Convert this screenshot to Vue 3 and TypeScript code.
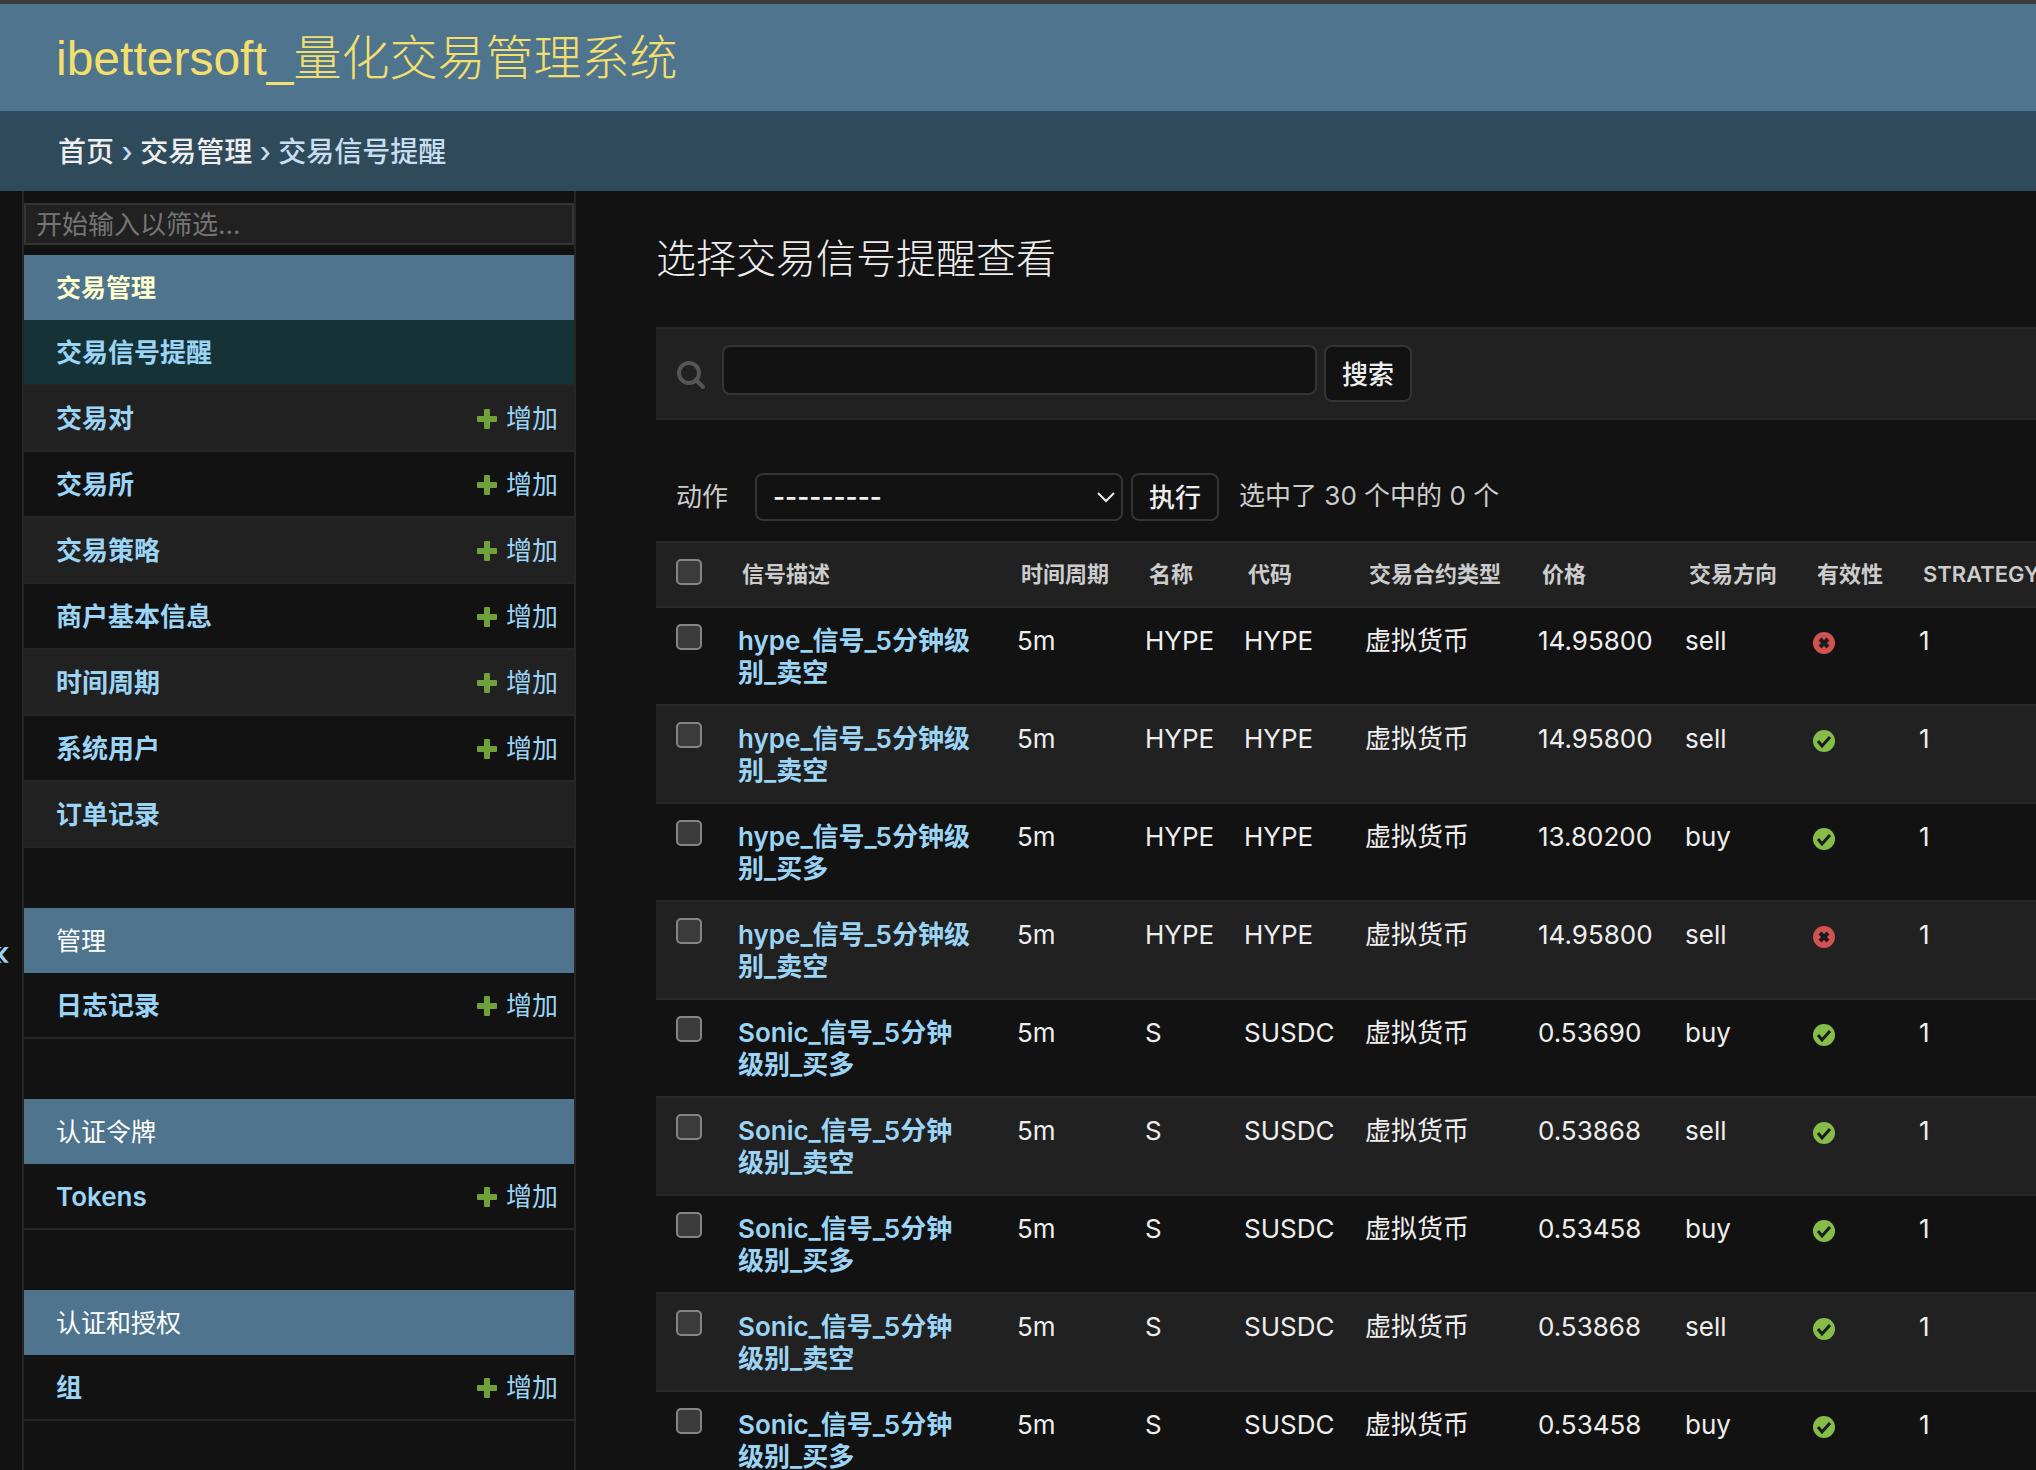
<script setup lang="ts">
import { ref } from 'vue'

interface Model {
  name: string
  add: boolean
  current?: boolean
}
interface AppGroup {
  name: string
  current?: boolean
  models: Model[]
}
interface Signal {
  title: string
  period: string
  name: string
  code: string
  type: string
  price: string
  side: string
  valid: boolean
  strategy: number
}

const groups: AppGroup[] = [
  {
    name: '交易管理',
    current: true,
    models: [
      { name: '交易信号提醒', add: false, current: true },
      { name: '交易对', add: true },
      { name: '交易所', add: true },
      { name: '交易策略', add: true },
      { name: '商户基本信息', add: true },
      { name: '时间周期', add: true },
      { name: '系统用户', add: true },
      { name: '订单记录', add: false },
    ],
  },
  { name: '管理', models: [{ name: '日志记录', add: true }] },
  { name: '认证令牌', models: [{ name: 'Tokens', add: true }] },
  { name: '认证和授权', models: [{ name: '组', add: true }] },
]

const columns = ['信号描述', '时间周期', '名称', '代码', '交易合约类型', '价格', '交易方向', '有效性', 'STRATEGY']

const hype = (act: string, price: string, side: string, valid: boolean): Signal => ({
  title: `hype_信号_5分钟级\n别_${act}`,
  period: '5m', name: 'HYPE', code: 'HYPE', type: '虚拟货币', price, side, valid, strategy: 1,
})
const sonic = (act: string, price: string, side: string): Signal => ({
  title: `Sonic_信号_5分钟\n级别_${act}`,
  period: '5m', name: 'S', code: 'SUSDC', type: '虚拟货币', price, side, valid: true, strategy: 1,
})

const signals: Signal[] = [
  hype('卖空', '14.95800', 'sell', false),
  hype('卖空', '14.95800', 'sell', true),
  hype('买多', '13.80200', 'buy', true),
  hype('卖空', '14.95800', 'sell', false),
  sonic('买多', '0.53690', 'buy'),
  sonic('卖空', '0.53868', 'sell'),
  sonic('买多', '0.53458', 'buy'),
  sonic('卖空', '0.53868', 'sell'),
  sonic('买多', '0.53458', 'buy'),
]

const filter = ref('')
const query = ref('')
const action = ref('')
</script>

<template>
  <div class="page">
    <header class="header">
      <h1 class="brand"><a href="#">ibettersoft_量化交易管理系统</a></h1>
    </header>
    <nav class="breadcrumbs" aria-label="面包屑">
      <a href="#">首页</a> › <a href="#">交易管理</a> › <span>交易信号提醒</span>
    </nav>

    <div class="main">
      <button class="toggle" type="button" aria-label="切换导航">«</button>
      <nav class="sidebar" aria-label="侧边栏">
        <input v-model="filter" class="filter" type="search" placeholder="开始输入以筛选..." aria-label="筛选导航项目" />
        <section v-for="g in groups" :key="g.name" class="group">
          <h2 class="caption" :class="{ current: g.current }"><a href="#">{{ g.name }}</a></h2>
          <ul class="models">
            <li v-for="m in g.models" :key="m.name" class="model" :class="{ current: m.current }">
              <a class="model-link" href="#">{{ m.name }}</a>
              <a v-if="m.add" class="add" href="#">
                <svg class="plus" viewBox="0 0 22 22" aria-hidden="true">
                  <path d="M9 1h4a1 1 0 0 1 1 1v6h6a1 1 0 0 1 1 1v4a1 1 0 0 1-1 1h-6v6a1 1 0 0 1-1 1H9a1 1 0 0 1-1-1v-6H2a1 1 0 0 1-1-1V9a1 1 0 0 1 1-1h6V2a1 1 0 0 1 1-1z" fill="#70a03a" />
                </svg>
                增加
              </a>
            </li>
          </ul>
        </section>
      </nav>

      <main class="content">
        <h1 class="title">选择交易信号提醒查看</h1>

        <form class="search" @submit.prevent>
          <label class="search-label" for="searchbar" aria-label="搜索">
            <svg class="lens" viewBox="0 0 30 30" aria-hidden="true">
              <circle cx="13" cy="13" r="10" fill="none" stroke="#555" stroke-width="4" />
              <path d="M20 20l7 7" stroke="#555" stroke-width="4" stroke-linecap="round" />
            </svg>
          </label>
          <input id="searchbar" v-model="query" class="search-input" type="text" />
          <button class="btn search-btn" type="submit">搜索</button>
        </form>

        <form class="actions" @submit.prevent>
          <label for="action">动作</label>
          <span class="select-wrap">
            <select id="action" v-model="action" class="select">
              <option value="">---------</option>
            </select>
            <svg class="chevron" viewBox="0 0 18 12" aria-hidden="true">
              <path d="M1 2l8 8 8-8" fill="none" stroke="#eee" stroke-width="2" />
            </svg>
          </span>
          <button class="btn" type="submit">执行</button>
          <span class="counter">选中了 30 个中的 0 个</span>
        </form>

        <table class="results">
          <colgroup>
            <col class="c-check" />
            <col class="c-title" />
            <col class="c-period" />
            <col class="c-name" />
            <col class="c-code" />
            <col class="c-type" />
            <col class="c-price" />
            <col class="c-side" />
            <col class="c-valid" />
            <col />
          </colgroup>
          <thead>
            <tr>
              <th class="check"><input type="checkbox" aria-label="全选" /></th>
              <th v-for="c in columns" :key="c" scope="col">{{ c }}</th>
            </tr>
          </thead>
          <tbody>
            <tr v-for="(s, i) in signals" :key="i">
              <td class="check"><input type="checkbox" :aria-label="s.title" /></td>
              <th class="name" scope="row"><a href="#">{{ s.title }}</a></th>
              <td>{{ s.period }}</td>
              <td>{{ s.name }}</td>
              <td>{{ s.code }}</td>
              <td>{{ s.type }}</td>
              <td>{{ s.price }}</td>
              <td>{{ s.side }}</td>
              <td class="valid">
                <svg v-if="s.valid" class="status" viewBox="0 0 22 22" role="img" aria-label="True">
                  <circle cx="11" cy="11" r="11" fill="#85bd48" />
                  <path d="M5 11l4 5 8-9" fill="none" stroke="#1b1b1b" stroke-width="3" />
                </svg>
                <svg v-else class="status" viewBox="0 0 22 22" role="img" aria-label="False">
                  <circle cx="11" cy="11" r="11" fill="#cf5350" />
                  <path d="M7 7l8 8M15 7l-8 8" fill="none" stroke="#1b1b1b" stroke-width="4" />
                </svg>
              </td>
              <td>{{ s.strategy }}</td>
            </tr>
          </tbody>
        </table>
      </main>
    </div>
  </div>
</template>

<style>
body {
  background: #121212;
  overflow: hidden;
}
</style>

<style scoped>
.page {
  height: 100vh;
  overflow: hidden;
  display: flex;
  flex-direction: column;
  background: #121212;
  color: #eee;
  font-family: Inter, "Noto Sans CJK SC", sans-serif;
  font-size: 26px;
  line-height: 32px;
}
*, *::before, *::after { box-sizing: border-box; }
a { color: #9bd4f5; text-decoration: none; }
h1, h2, ul { margin: 0; padding: 0; }
input, button, select { font: inherit; color: #eee; margin: 0; }

.header {
  flex: none;
  height: 111px;
  padding: 2px 56px 0;
  display: flex;
  align-items: center;
  background: #4f748d;
  border-top: 4px solid #3d3c3c;
}
.brand {
  font-family: "Liberation Sans", "Noto Sans CJK SC", sans-serif;
  font-size: 48px;
  line-height: 56px;
  font-weight: 300;
}
.brand a { color: #f3df6d; }

.breadcrumbs {
  flex: none;
  height: 80px;
  padding: 1px 58px 0;
  background: #2f4a5a;
  color: #c8def0;
  font-size: 28px;
  line-height: 80px;
  font-weight: 500;
}
.breadcrumbs a { color: #eee; }

.main {
  flex: 1;
  min-height: 0;
  display: flex;
}
.toggle {
  flex: none;
  width: 22px;
  display: flex;
  justify-content: flex-end;
  align-items: center;
  padding: 244px 12px 0 0;
  overflow: hidden;
  border: 0;
  background: none;
  color: #9bd4f5;
  font-size: 34px;
  font-weight: 500;
}

.sidebar {
  flex: none;
  width: 554px;
  padding-top: 12px;
  border: 0 solid #262626;
  border-width: 0 2px;
}
.filter {
  display: block;
  width: 100%;
  height: 42px;
  margin-bottom: 10px;
  padding: 0 10px;
  border: 2px solid #343434;
  border-radius: 0;
  background: #212121;
  appearance: none;
}
.filter::placeholder { color: #757575; opacity: 1; }
.group { margin-bottom: 60px; }
.caption {
  height: 65px;
  padding: 0 32px;
  background: #4f748d;
  font-size: 25px;
  line-height: 66px;
  font-weight: 400;
}
.caption a { color: #fff; }
.caption.current { font-weight: 700; }
.caption.current a { color: #ffffd0; }
.models { list-style: none; }
.model {
  height: 66px;
  padding: 2px 16px 0 32px;
  display: flex;
  justify-content: space-between;
  align-items: center;
  border-bottom: 2px solid #262626;
}
.model:nth-child(even) { background: #212121; }
.model.current { background: #153337; }
.model-link { font-weight: 600; }
.add { display: flex; align-items: center; gap: 8px; }
.plus { width: 22px; height: 22px; }

.content {
  flex: 1;
  min-width: 0;
  padding: 40px 0 0 80px;
  overflow: hidden;
}
.title {
  font-size: 40px;
  line-height: 56px;
  font-weight: 300;
  margin-bottom: 40px;
}
.search {
  display: flex;
  align-items: flex-start;
  height: 93px;
  padding: 16px 20px;
  background: #212121;
  border: 0 solid #282828;
  border-width: 2px 0;
}
.search-label { display: flex; padding-top: 15px; margin-right: 16px; }
.lens { width: 30px; height: 30px; }
.search-input {
  width: 595px;
  height: 50px;
  margin-right: 7px;
  padding: 0 12px;
  border: 2px solid #343434;
  border-radius: 8px;
  background: #121212;
}
.btn {
  width: 88px;
  height: 48px;
  padding: 2px 0 0;
  border: 2px solid #343434;
  border-radius: 8px;
  background: #121212;
  font-weight: 500;
}
.search-btn { height: 57px; }
.actions {
  display: flex;
  align-items: center;
  gap: 8px;
  padding: 53px 20px 20px;
  color: #ccc;
}
.select-wrap { position: relative; display: flex; margin-left: 19px; }
.select {
  width: 368px;
  height: 48px;
  padding: 0 16px;
  border: 2px solid #343434;
  border-radius: 8px;
  background: #121212;
  font-weight: 600;
  appearance: none;
}
.chevron {
  position: absolute;
  right: 8px;
  top: 18px;
  width: 18px;
  height: 12px;
  pointer-events: none;
}
.counter { margin-left: 12px; padding-bottom: 2px; }

.results {
  width: 100%;
  table-layout: fixed;
  border-collapse: separate;
  border-spacing: 0;
}
.c-check { width: 66px; }
.c-title { width: 279px; }
.c-period { width: 128px; }
.c-name { width: 99px; }
.c-code { width: 121px; }
.c-type { width: 173px; }
.c-price { width: 147px; }
.c-side { width: 128px; }
.c-valid { width: 106px; }
th, td {
  padding: 17px 16px 15px;
  text-align: left;
  vertical-align: top;
  white-space: nowrap;
  font-weight: 400;
  border-bottom: 2px solid #282828;
}
thead th {
  height: 67px;
  padding: 0 20px 2px;
  vertical-align: middle;
  background: #212121;
  border-top: 2px solid #282828;
  color: #ccc;
  font-size: 22px;
  font-weight: 600;
}
thead th:last-child { padding-right: 0; }
tbody tr:nth-child(even) { background: #212121; }
.name, .name a { font-weight: 600; white-space: pre-line; }
.check, thead .check { padding: 16px 20px; vertical-align: top; }
.check input {
  display: block;
  width: 26px;
  height: 26px;
  border: 2px solid #858585;
  border-radius: 5px;
  background: #3b3b3b;
  appearance: none;
}
.valid { padding-top: 24px; }
.status { display: block; width: 22px; height: 22px; }
</style>
